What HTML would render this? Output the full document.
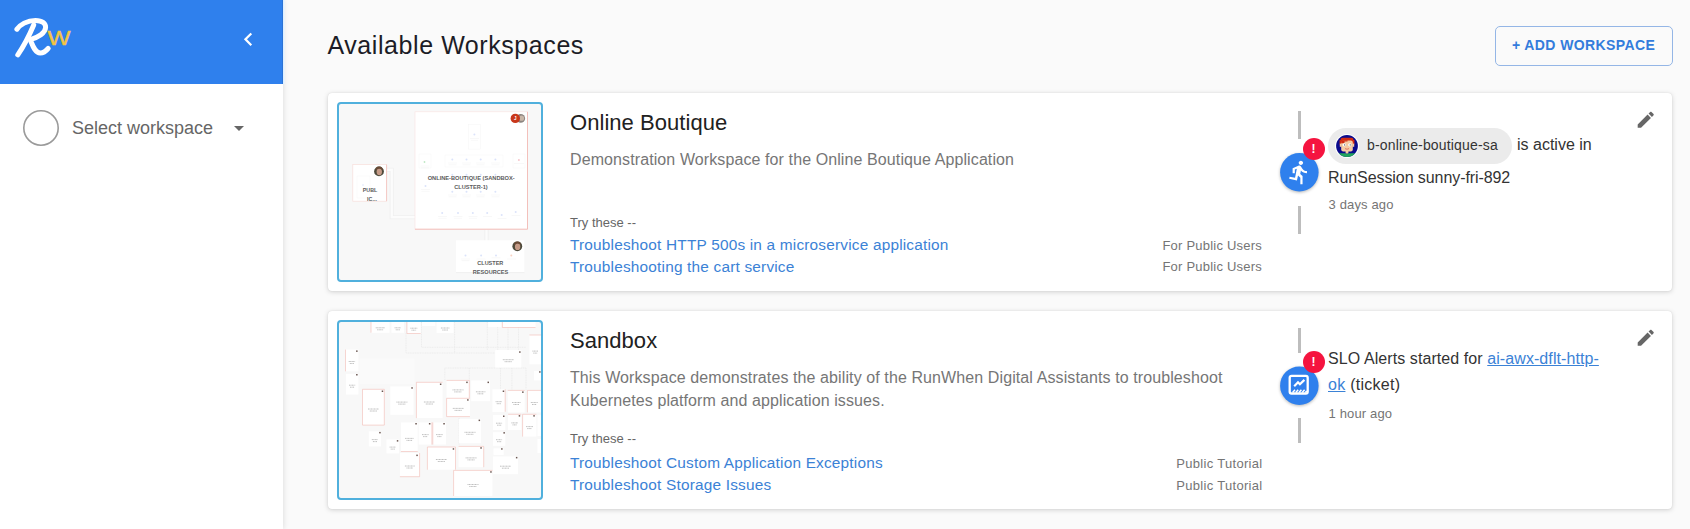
<!DOCTYPE html>
<html lang="en">
<head>
<meta charset="utf-8">
<title>Available Workspaces</title>
<style>
*{box-sizing:border-box;margin:0;padding:0}
html,body{width:1690px;height:529px;overflow:hidden;background:#fafafa;font-family:"Liberation Sans",sans-serif;color:#212121}
.abs{position:absolute;white-space:nowrap;line-height:20px}
svg{position:absolute;overflow:visible}
#side{position:absolute;left:0;top:0;width:283px;height:529px;background:#fff;box-shadow:1px 0 5px rgba(0,0,0,.10)}
#sidehead{position:absolute;left:0;top:0;width:283px;height:84px;background:#2f80ed;box-shadow:inset -1px 0 0 #2b73d6}
#circle{position:absolute;left:23px;top:110px;width:36px;height:36px;border-radius:50%;border:1.5px solid #9a9a9a}
#selws{left:72px;top:118px;font-size:18px;color:#666}
#arrow{position:absolute;left:234px;top:126px;width:0;height:0;border-left:5px solid transparent;border-right:5px solid transparent;border-top:5.5px solid #666}
h1{position:absolute;left:327.5px;top:35px;font-size:25px;line-height:20px;font-weight:400;color:#1c1c26;white-space:nowrap;letter-spacing:.57px}
#addbtn{position:absolute;left:1495px;top:26px;width:178px;height:40px;border:1px solid #94b6e6;border-radius:5px}
#addtxt{left:1512px;top:34.6px;color:#337cdc;font-weight:700;font-size:14px;letter-spacing:.4px}
.card{position:absolute;left:328px;width:1344px;height:198px;background:#fff;border-radius:4px;box-shadow:0 1px 5px rgba(0,0,0,.17),0 0 1px rgba(0,0,0,.14)}
.thumb{position:absolute;left:337px;width:206px;height:180px;border:2px solid #50b0dd;border-radius:4px;background:#f8f8f8;overflow:hidden}
.title{left:570px;letter-spacing:.05px;font-size:22px;color:#212121}
.desc{left:570px;font-size:16px;color:#767676;letter-spacing:.1px}
.try{left:570px;font-size:13px;color:#666}
.lnk{left:570px;font-size:15.400px;color:#3b82d6;letter-spacing:.19px}
.tag{right:428px;font-size:13px;color:#757575;letter-spacing:.22px}
.vline{position:absolute;left:1298px;width:3px;background:#bdbdbd}
.dot{position:absolute;left:1280.5px;width:38px;height:38px;border-radius:50%;background:#2f80ed;box-shadow:0 1px 3px rgba(0,0,0,.3)}
.dsv{filter:drop-shadow(0 1px 1.5px rgba(0,0,0,.28))}
.badge{position:absolute;left:1303px;width:22px;height:22px;border-radius:50%;background:#f5143f;color:#fff;font-size:12px;font-weight:700;line-height:22px;text-align:center;padding-right:1px}
.act{left:1328px;font-size:16px;color:#333}
.ago{left:1328.5px;font-size:13px;color:#757575;letter-spacing:.15px}
.chip{position:absolute;left:1328px;top:128px;width:184px;height:36px;border-radius:18px;background:#ebebeb}
a{color:#3b82d6;text-decoration:underline}
</style>
</head>
<body>
<div id="side">
  <div id="sidehead"></div>
  <svg style="left:0;top:0" width="90" height="70" viewBox="0 0 90 70" role="img" aria-label="RunWhen logo">
    <title>RunWhen</title>
    <g fill="none" stroke="#fff" stroke-width="5" stroke-linecap="round" stroke-linejoin="round">
      <path d="M16.9 29.2C20 24.8 27 20.4 35.5 20.4C42.5 20.4 45.8 23.4 45.6 27.5C45.3 33 38.5 37.6 30.2 39.6C32.5 45 34.8 53 40.2 53C43.5 53 46.3 50.8 48.2 48.4"/>
      <path d="M33.700 25C29.500 35 23.500 46.500 17.800 54.800"/>
    </g>
    <text x="47.6" y="45.2" font-family="Liberation Sans, sans-serif" font-size="19.5" fill="#f4c542" stroke="#f4c542" stroke-width=".400" transform="translate(47.6 0) scale(1.25 1) translate(-47.6 0)">W</text>
  </svg>
  <svg style="left:235.100px;top:25.800px" width="26.600" height="26.600" viewBox="0 0 24 24"><path fill="#fff" d="M15.41 7.41L14 6l-6 6 6 6 1.41-1.41L10.830 12z"/></svg>
  <svg style="left:21px;top:108px" width="40" height="40" viewBox="0 0 40 40"><circle cx="20" cy="20" r="17.2" fill="none" stroke="#9a9a9a" stroke-width="1.600"/></svg>
  <div id="selws" class="abs">Select workspace</div>
  <div id="arrow"></div>
</div>
<div style="position:absolute;left:283px;top:0;width:2px;height:84px;background:linear-gradient(90deg,#d9ecff,#eef6fd)"></div>
<h1>Available Workspaces</h1>
<div id="addbtn"></div>
<div id="addtxt" class="abs">+ ADD WORKSPACE</div>

<div class="card" style="top:93px"></div>
<div class="thumb" style="top:102px"></div>
<svg id="t1" style="left:339px;top:104px" width="202" height="176" viewBox="339 104 202 176">
<g fill="none">
<path d="M387 169.800H391.700V217.300H415" stroke="#efefef" stroke-width="4"/>
<path d="M387 169.800H391.700V217.300H415" stroke="#fcfcfc" stroke-width="2.400"/>
<path d="M486.500 229V241" stroke="#efefef" stroke-width="4"/>
<path d="M486.500 229V241" stroke="#fcfcfc" stroke-width="2.400"/>
<rect x="415" y="111.800" width="112.500" height="117.400" fill="#fff" stroke="#fae6e4" stroke-width=".7"/>
<path d="M527.500 111.800V229.200H415" stroke="#f1b5ae" stroke-width=".8"/>
<rect x="352.800" y="164.600" width="33.800" height="36.600" fill="#fff" stroke="#f8dedb" stroke-width=".7"/>
<path d="M386.600 164.600V201.200" stroke="#f3c2bc" stroke-width=".8"/>
<rect x="456" y="240.300" width="68.300" height="32" fill="#fff"/>
<path d="M456 272.600H524.300" stroke="#ececec" stroke-width=".8"/>
<g stroke="#f5f5f5" stroke-width=".5">
<rect x="468.400" y="124.600" width="12.300" height="24.500"/>
<rect x="445" y="155" width="58" height="12"/>
<rect x="419" y="154" width="12" height="14"/>
<rect x="513" y="154" width="12" height="14"/>
<rect x="357" y="176" width="13" height="22"/>
</g>
<g fill="#dbe3fa">
<circle cx="474.400" cy="134.600" r="1"/>
<circle cx="452.300" cy="159.500" r="1"/><circle cx="466.500" cy="159.500" r="1"/><circle cx="480.700" cy="159.500" r="1"/><circle cx="495.400" cy="159.500" r="1"/>
<circle cx="452.300" cy="174.700" r="1"/><circle cx="466.500" cy="174.700" r="1"/><circle cx="480.700" cy="174.700" r="1"/><circle cx="495.400" cy="174.700" r="1"/>
<circle cx="452.300" cy="191.700" r="1"/><circle cx="466.500" cy="191.700" r="1"/><circle cx="480.700" cy="191.700" r="1"/><circle cx="495.400" cy="191.700" r="1"/>
<circle cx="425.500" cy="186" r="1"/>
<circle cx="442.200" cy="212.900" r="1"/><circle cx="458" cy="212.900" r="1"/><circle cx="472.800" cy="212.900" r="1"/><circle cx="487.200" cy="212.900" r="1"/><circle cx="501.700" cy="215" r="1"/><circle cx="515.700" cy="212" r="1"/>
<circle cx="465.500" cy="255.400" r="1"/><circle cx="481.100" cy="255.400" r="1"/><circle cx="496" cy="255.400" r="1"/>
<circle cx="363" cy="185" r=".8"/>
</g>
<circle cx="424.500" cy="162" r=".9" fill="#bfe8c4"/>
<circle cx="518.900" cy="160.100" r="1" fill="#f7c6cc"/>
<circle cx="511.300" cy="255.400" r="1" fill="#f8d2c2"/>
<g stroke="#f0f0f0" stroke-width=".5">
<path d="M470 138.500h9M471 140.300h7"/>
<path d="M448 163h9M462 163h9M476 163h9M491 163h9M448.500 164.800h8M462.500 164.800h8M476.500 164.800h8M491.500 164.800h8"/>
<path d="M420.500 166h9M421 167.800h8M514 163.500h10"/>
<path d="M448 195h9M462 195h9M476 195h9M491 195h9M448.500 196.800h8M462.500 196.800h8M476.500 196.800h8M491.500 196.800h8"/>
<path d="M421 189.500h9M421.500 191.300h8"/>
<path d="M438 216.500h9M453.500 216.500h9M468.500 216.500h9M483 216.500h9M497.500 218.500h9M511.500 215.500h9M438.500 218.300h8M454 218.300h8M469 218.300h8"/>
<path d="M461 259h9M476.500 259h9M491.500 257.800h9M507 259h9M461.500 260.600h8"/>
</g>
<circle cx="520.700" cy="118.400" r="4.400" fill="#8c8580"/>
<circle cx="521.500" cy="118.200" r="2.600" fill="#c9b7a8"/>
<circle cx="515.300" cy="118.400" r="4.700" fill="#c8371b"/>
<circle cx="379" cy="171.400" r="4.900" fill="#4d4a3b"/>
<ellipse cx="379.300" cy="171.800" rx="2.700" ry="3.400" fill="#c59a86"/>
<path d="M375.800 170.200a3.400 3.400 0 0 1 6.800-.4l-1.200-.4c-1.400-1.200-3.200-1.100-4.400.100z" fill="#6b4a35"/>
<circle cx="517.300" cy="246.300" r="4.900" fill="#4d4a3b"/>
<ellipse cx="517.600" cy="246.700" rx="2.700" ry="3.400" fill="#c59a86"/>
<path d="M514.100 245.100a3.400 3.400 0 0 1 6.800-.4l-1.200-.4c-1.400-1.200-3.200-1.100-4.400.100z" fill="#6b4a35"/>
</g>
<g font-family="Liberation Sans, sans-serif" font-weight="700" font-size="5.600" fill="#5c5c5c" text-anchor="middle">
<text x="515.300" y="120.200" font-size="4.600" fill="#fff">J</text>
<text x="471.200" y="180.300" textLength="87" lengthAdjust="spacingAndGlyphs">ONLINE-BOUTIQUE (SANDBOX-</text>
<text x="471" y="189.300" textLength="33.500" lengthAdjust="spacingAndGlyphs">CLUSTER-1)</text>
<text x="370" y="192.100" textLength="14.500" lengthAdjust="spacingAndGlyphs">PUBL</text>
<text x="372" y="201.100" textLength="9.800" lengthAdjust="spacingAndGlyphs">IC...</text>
<text x="490.300" y="265.200" textLength="26" lengthAdjust="spacingAndGlyphs">CLUSTER</text>
<text x="490.500" y="274" textLength="35.300" lengthAdjust="spacingAndGlyphs">RESOURCES</text>
</g>

</svg>
<div class="abs title" style="top:113px">Online Boutique</div>
<div class="abs desc" style="top:150px">Demonstration Workspace for the Online Boutique Application</div>
<div class="abs try" style="top:212.5px">Try these --</div>
<div class="abs lnk" style="top:234.6px">Troubleshoot HTTP 500s in a microservice application</div>
<div class="abs lnk" style="top:256.8px">Troubleshooting the cart service</div>
<div class="abs tag" style="top:235.800px">For Public Users</div>
<div class="abs tag" style="top:257.400px">For Public Users</div>
<div class="vline" style="top:111px;height:28px"></div>
<div class="vline" style="top:205.5px;height:28px"></div>
<svg class="dsv" style="left:1279px;top:152px" width="41" height="41" viewBox="0 0 41 41"><circle cx="20.350" cy="20.300" r="19.250" fill="#2f80ed"/></svg>
<svg style="left:1285.900px;top:158.800px" width="26.500" height="26.500" viewBox="0 0 24 24"><path fill="#fff" d="M13.49 5.48c1.100 0 2-.900 2-2s-.900-2-2-2-2 .900-2 2 .900 2 2 2zm-3.600 13.900l1-4.400 2.100 2v6h2v-7.500l-2.100-2 .600-3c1.300 1.500 3.300 2.500 5.500 2.500v-2c-1.900 0-3.500-1-4.300-2.400l-1-1.600c-.400-.600-1-1-1.700-1-.300 0-.500.100-.800.100l-5.200 2.200v4.700h2v-3.400l1.800-.700-1.600 8.100-4.900-1-.400 2 7 1.400z"/></svg>
<div class="badge" style="top:138px">!</div>
<div class="chip"></div>
<svg id="av" style="left:1334.5px;top:134px" width="24" height="24" viewBox="0 0 24 24">
<defs><clipPath id="avc"><circle cx="12" cy="12" r="10.900"/></clipPath></defs>
<circle cx="12" cy="12" r="12" fill="#fff"/>
<circle cx="12" cy="12" r="10.900" fill="#0a0a8c"/>
<g clip-path="url(#avc)">
<rect x="5.500" y="3.800" width="13" height="5.500" rx="2" fill="#d22b12"/>
<rect x="4.600" y="6" width="3.200" height="4.500" fill="#d22b12"/>
<rect x="16.200" y="6" width="3.200" height="4.500" fill="#d22b12"/>
<rect x="6.200" y="6.600" width="11.600" height="10.800" rx="2" fill="#f4cba4"/>
<rect x="4.800" y="9.600" width="1.800" height="3.200" fill="#f4cba4"/>
<rect x="17.400" y="9.600" width="1.800" height="3.200" fill="#f4cba4"/>
<path d="M6.200 9.200V6.200H12.500V7.600H9.500V9.200Z" fill="#d22b12"/>
<rect x="10.600" y="17" width="2.800" height="2.600" fill="#f4cba4"/>
<circle cx="9.200" cy="10.800" r="1.600" fill="#fff"/>
<circle cx="14.800" cy="10.800" r="1.600" fill="#fff"/>
<circle cx="9.600" cy="10.900" r=".6" fill="#456"/>
<circle cx="15.200" cy="10.900" r=".6" fill="#456"/>
<path d="M10 14.600q2 1.300 4 0" stroke="#d8504a" stroke-width=".7" fill="none"/>
<path d="M1 19.200H10.600L12 20.300L13.400 19.200H23V24H1Z" fill="#20a45c"/>
</g>

</svg>
<div class="abs" style="left:1367px;top:135px;font-size:14px;color:#333;letter-spacing:.16px">b-online-boutique-sa</div>
<div class="abs act" style="left:1517px;top:134.500px">is active in</div>
<div class="abs act" style="top:168px;letter-spacing:-.08px">RunSession sunny-fri-892</div>
<div class="abs ago" style="top:195px">3 days ago</div>
<svg style="left:1634.800px;top:109.400px" width="21.500" height="21.500" viewBox="0 0 24 24"><path fill="#666" d="M3 17.250V21h3.750L17.810 9.940l-3.750-3.750L3 17.250zM20.710 7.040c.390-.390.390-1.020 0-1.410l-2.340-2.340c-.390-.390-1.020-.390-1.410 0l-1.830 1.830 3.750 3.750 1.830-1.830z"/></svg>

<div class="card" style="top:311px"></div>
<div class="thumb" style="top:320px"></div>
<svg id="t2" style="left:339px;top:322px" width="202" height="176" viewBox="339 322 202 176">
<defs><clipPath id="cp2"><rect x="339" y="322" width="202" height="176"/></clipPath></defs>
<g clip-path="url(#cp2)" fill="none">
<g stroke="#e8e8e8" stroke-width=".8" stroke-dasharray="1 .7">
<path d="M406 333V353H495M421.500 322V347.300H526M454.600 322V353M487.300 322V350M497.700 322V350M508 322V350M518.500 322V350"/>
<path d="M444.800 380V368H526V390M469.300 368V380M500.500 368V390M511.900 368V390"/>
<path d="M459 418V445M452 380V392"/>
</g>
<rect x="359.700" y="358.600" width="54.800" height="25.600" fill="#fafafa"/>
<rect x="371.0" y="321.8" width="18.5" height="11.0" fill="#fff"/>
<path d="M371.0 321.8V332.7" stroke="#f1bab4" stroke-width=".6"/>
<path d="M375.7 327.8h9.3M377.2 329.8h6.1" stroke="#808080" stroke-width=".5" stroke-dasharray="1.1 .4"/>
<rect x="391.4" y="321.8" width="12.7" height="11.0" fill="#fff"/>
<path d="M394.6 327.8h6.3M395.7 329.8h4.2" stroke="#808080" stroke-width=".5" stroke-dasharray="1.1 .4"/>
<rect x="406.9" y="321.8" width="13.8" height="11.7" fill="#fff"/>
<path d="M406.9 321.8V333.5" stroke="#f1bab4" stroke-width=".6"/>
<path d="M406.9 333.5H420.7" stroke="#f1bab4" stroke-width=".6"/>
<path d="M410.4 328.2h6.9M411.5 330.2h4.6" stroke="#808080" stroke-width=".5" stroke-dasharray="1.1 .4"/>
<rect x="422.1" y="321.8" width="13.2" height="4.2" fill="#fff"/>
<rect x="436.6" y="321.8" width="17.0" height="11.3" fill="#fff"/>
<path d="M440.9 328.0h8.5M442.3 330.0h5.6" stroke="#808080" stroke-width=".5" stroke-dasharray="1.1 .4"/>
<rect x="488.2" y="321.8" width="13.2" height="5.3" fill="#fff"/>
<rect x="502.4" y="321.8" width="33.1" height="5.7" fill="#fff"/>
<path d="M502.4 321.8V327.5" stroke="#f1bab4" stroke-width=".6"/>
<path d="M502.4 327.5H535.5" stroke="#f1bab4" stroke-width=".6"/>
<rect x="529.4" y="335.0" width="11.7" height="29.3" fill="#fff"/>
<path d="M529.4 335.0H541.2" stroke="#f1bab4" stroke-width=".6"/>
<path d="M532.4 351.1h5.9M533.3 353.1h3.9" stroke="#808080" stroke-width=".5" stroke-dasharray="1.1 .4"/>
<rect x="495.2" y="350.1" width="26.1" height="17.4" fill="#fff"/>
<path d="M502.8 359.7h11.0M504.6 361.7h7.3" stroke="#808080" stroke-width=".5" stroke-dasharray="1.1 .4"/>
<rect x="519.1" y="351.3" width="1.5" height="1.500" fill="#6a5650"/>
<rect x="345.5" y="349.6" width="12.9" height="21.7" fill="#fff"/>
<path d="M345.5 349.6V371.3" stroke="#f1bab4" stroke-width=".6"/>
<path d="M348.7 361.5h6.4M349.8 363.5h4.2" stroke="#808080" stroke-width=".5" stroke-dasharray="1.1 .4"/>
<rect x="356.1" y="350.4" width="1.5" height="1.500" fill="#6a5650"/>
<rect x="345.9" y="373.8" width="12.5" height="20.8" fill="#fff"/>
<path d="M349.0 385.2h6.2M350.0 387.2h4.1" stroke="#808080" stroke-width=".5" stroke-dasharray="1.1 .4"/>
<rect x="356.1" y="374.0" width="1.5" height="1.500" fill="#6a5650"/>
<rect x="534.0" y="370.9" width="7.2" height="9.5" fill="#fff"/>
<rect x="539.1" y="371.2" width="1.5" height="1.500" fill="#6a5650"/>
<rect x="446.6" y="380.4" width="22.7" height="17.4" fill="#fff"/>
<path d="M446.6 380.4H469.3" stroke="#f1bab4" stroke-width=".6"/>
<path d="M469.3 380.4V397.8" stroke="#f1bab4" stroke-width=".6"/>
<path d="M452.5 389.9h11.0M454.3 391.9h7.3" stroke="#808080" stroke-width=".5" stroke-dasharray="1.1 .4"/>
<rect x="466.2" y="381.6" width="1.5" height="1.500" fill="#6a5650"/>
<rect x="471.2" y="380.4" width="18.9" height="20.8" fill="#fff"/>
<path d="M475.9 391.8h9.5M477.5 393.8h6.2" stroke="#808080" stroke-width=".5" stroke-dasharray="1.1 .4"/>
<rect x="487.5" y="381.6" width="1.5" height="1.500" fill="#6a5650"/>
<rect x="362.5" y="389.3" width="21.7" height="35.8" fill="#fff"/>
<path d="M362.5 389.3H384.3" stroke="#f1bab4" stroke-width=".6"/>
<path d="M362.5 389.3V425.1" stroke="#f1bab4" stroke-width=".6"/>
<path d="M384.3 389.3V425.1" stroke="#f1bab4" stroke-width=".6"/>
<path d="M362.5 425.1H384.3" stroke="#f1bab4" stroke-width=".6"/>
<path d="M368.0 409.0h10.9M369.8 411.0h7.2" stroke="#808080" stroke-width=".5" stroke-dasharray="1.1 .4"/>
<rect x="381.7" y="390.5" width="1.5" height="1.500" fill="#6a5650"/>
<rect x="390.3" y="386.4" width="23.3" height="28.4" fill="#fff"/>
<path d="M396.4 402.1h11.0M398.3 404.1h7.3" stroke="#808080" stroke-width=".5" stroke-dasharray="1.1 .4"/>
<rect x="411.3" y="387.2" width="1.5" height="1.500" fill="#6a5650"/>
<rect x="416.4" y="382.3" width="26.1" height="35.8" fill="#fff"/>
<path d="M416.4 382.3H442.5" stroke="#f1bab4" stroke-width=".6"/>
<path d="M416.4 382.3V418.1" stroke="#f1bab4" stroke-width=".6"/>
<path d="M423.9 402.0h11.0M425.8 404.0h7.3" stroke="#808080" stroke-width=".5" stroke-dasharray="1.1 .4"/>
<rect x="439.9" y="383.5" width="1.5" height="1.500" fill="#6a5650"/>
<rect x="446.6" y="398.3" width="23.3" height="18.2" fill="#fff"/>
<path d="M446.6 398.3H469.9" stroke="#f1bab4" stroke-width=".6"/>
<path d="M446.6 398.3V416.6" stroke="#f1bab4" stroke-width=".6"/>
<path d="M446.6 416.6H469.9" stroke="#f1bab4" stroke-width=".6"/>
<path d="M452.8 408.4h11.0M454.6 410.4h7.3" stroke="#808080" stroke-width=".5" stroke-dasharray="1.1 .4"/>
<rect x="467.1" y="399.2" width="1.5" height="1.500" fill="#6a5650"/>
<rect x="492.4" y="389.3" width="12.9" height="22.6" fill="#fff"/>
<path d="M505.2 389.3V411.8" stroke="#f1bab4" stroke-width=".6"/>
<path d="M495.6 401.7h6.4M496.7 403.7h4.2" stroke="#808080" stroke-width=".5" stroke-dasharray="1.1 .4"/>
<rect x="502.7" y="390.5" width="1.5" height="1.500" fill="#6a5650"/>
<rect x="507.7" y="390.4" width="17.0" height="22.0" fill="#fff"/>
<path d="M507.7 390.4H524.7" stroke="#f1bab4" stroke-width=".6"/>
<path d="M512.0 402.5h8.5M513.4 404.5h5.6" stroke="#808080" stroke-width=".5" stroke-dasharray="1.1 .4"/>
<rect x="522.1" y="391.4" width="1.5" height="1.500" fill="#6a5650"/>
<rect x="527.4" y="390.4" width="13.8" height="22.0" fill="#fff"/>
<path d="M527.4 390.4H541.2" stroke="#f1bab4" stroke-width=".6"/>
<path d="M527.4 390.4V412.4" stroke="#f1bab4" stroke-width=".6"/>
<path d="M530.8 402.5h6.9M532.0 404.5h4.6" stroke="#808080" stroke-width=".5" stroke-dasharray="1.1 .4"/>
<rect x="493.0" y="414.9" width="12.3" height="15.1" fill="#fff"/>
<path d="M496.0 423.2h6.1M497.1 425.2h4.1" stroke="#808080" stroke-width=".5" stroke-dasharray="1.1 .4"/>
<rect x="503.0" y="415.5" width="1.5" height="1.500" fill="#6a5650"/>
<rect x="508.1" y="414.3" width="13.2" height="15.7" fill="#fff"/>
<path d="M508.1 414.3H521.3" stroke="#f1bab4" stroke-width=".6"/>
<path d="M511.4 422.9h6.6M512.5 424.9h4.4" stroke="#808080" stroke-width=".5" stroke-dasharray="1.1 .4"/>
<rect x="518.7" y="415.1" width="1.5" height="1.500" fill="#6a5650"/>
<rect x="522.6" y="414.3" width="13.8" height="22.3" fill="#fff"/>
<path d="M522.6 414.3H536.4" stroke="#f1bab4" stroke-width=".6"/>
<path d="M522.6 414.3V436.6" stroke="#f1bab4" stroke-width=".6"/>
<path d="M526.1 426.6h6.9M527.2 428.6h4.6" stroke="#808080" stroke-width=".5" stroke-dasharray="1.1 .4"/>
<rect x="533.3" y="415.1" width="1.5" height="1.500" fill="#6a5650"/>
<rect x="537.4" y="415.2" width="3.8" height="20.8" fill="#fff"/>
<rect x="458.9" y="419.0" width="22.1" height="24.2" fill="#fff"/>
<path d="M464.5 432.3h11.0M466.3 434.3h7.3" stroke="#808080" stroke-width=".5" stroke-dasharray="1.1 .4"/>
<rect x="478.6" y="419.6" width="1.5" height="1.500" fill="#6a5650"/>
<rect x="400.9" y="422.4" width="16.8" height="29.1" fill="#fff"/>
<path d="M400.9 451.5H417.7" stroke="#f1bab4" stroke-width=".6"/>
<path d="M405.1 438.4h8.4M406.5 440.4h5.6" stroke="#808080" stroke-width=".5" stroke-dasharray="1.1 .4"/>
<rect x="415.3" y="423.0" width="1.5" height="1.500" fill="#6a5650"/>
<rect x="418.7" y="422.4" width="13.2" height="22.1" fill="#fff"/>
<path d="M431.9 422.4V444.5" stroke="#f1bab4" stroke-width=".6"/>
<path d="M422.0 434.6h6.6M423.1 436.6h4.4" stroke="#808080" stroke-width=".5" stroke-dasharray="1.1 .4"/>
<rect x="428.9" y="423.0" width="1.5" height="1.500" fill="#6a5650"/>
<rect x="432.8" y="422.4" width="13.2" height="22.1" fill="#fff"/>
<path d="M432.8 422.4V444.5" stroke="#f1bab4" stroke-width=".6"/>
<path d="M436.1 434.6h6.6M437.3 436.6h4.4" stroke="#808080" stroke-width=".5" stroke-dasharray="1.1 .4"/>
<rect x="443.3" y="423.0" width="1.5" height="1.500" fill="#6a5650"/>
<rect x="368.8" y="431.3" width="12.3" height="15.1" fill="#fff"/>
<path d="M371.8 439.6h6.1M372.9 441.6h4.1" stroke="#808080" stroke-width=".5" stroke-dasharray="1.1 .4"/>
<rect x="379.2" y="431.9" width="1.5" height="1.500" fill="#6a5650"/>
<rect x="386.5" y="439.4" width="12.5" height="14.0" fill="#fff"/>
<path d="M389.6 447.1h6.2M390.7 449.1h4.1" stroke="#808080" stroke-width=".5" stroke-dasharray="1.1 .4"/>
<rect x="396.8" y="440.1" width="1.5" height="1.500" fill="#6a5650"/>
<rect x="399.9" y="453.0" width="19.7" height="23.6" fill="#fff"/>
<path d="M419.6 453.0V476.7" stroke="#f1bab4" stroke-width=".6"/>
<path d="M399.9 476.7H419.6" stroke="#f1bab4" stroke-width=".6"/>
<path d="M404.9 466.0h9.8M406.5 468.0h6.5" stroke="#808080" stroke-width=".5" stroke-dasharray="1.1 .4"/>
<rect x="416.3" y="454.6" width="1.5" height="1.500" fill="#6a5650"/>
<rect x="427.4" y="447.0" width="28.2" height="22.7" fill="#fff"/>
<path d="M427.4 447.0H455.5" stroke="#f1bab4" stroke-width=".6"/>
<path d="M427.4 447.0V469.7" stroke="#f1bab4" stroke-width=".6"/>
<path d="M455.5 447.0V469.7" stroke="#f1bab4" stroke-width=".6"/>
<path d="M435.9 459.5h11.0M437.8 461.5h7.3" stroke="#808080" stroke-width=".5" stroke-dasharray="1.1 .4"/>
<rect x="452.7" y="448.2" width="1.5" height="1.500" fill="#6a5650"/>
<rect x="458.6" y="446.4" width="25.1" height="20.8" fill="#fff"/>
<path d="M458.6 446.4H483.7" stroke="#f1bab4" stroke-width=".6"/>
<path d="M483.7 446.4V467.2" stroke="#f1bab4" stroke-width=".6"/>
<path d="M465.6 457.9h11.0M467.5 459.9h7.3" stroke="#808080" stroke-width=".5" stroke-dasharray="1.1 .4"/>
<rect x="480.3" y="447.2" width="1.5" height="1.500" fill="#6a5650"/>
<rect x="493.0" y="432.2" width="12.3" height="13.6" fill="#fff"/>
<path d="M496.0 439.7h6.1M497.1 441.7h4.1" stroke="#808080" stroke-width=".5" stroke-dasharray="1.1 .4"/>
<rect x="503.4" y="432.1" width="1.5" height="1.500" fill="#6a5650"/>
<rect x="493.5" y="448.3" width="10.2" height="6.6" fill="#fff"/>
<rect x="501.1" y="448.2" width="1.5" height="1.500" fill="#6a5650"/>
<rect x="493.0" y="456.4" width="25.1" height="17.8" fill="#fff"/>
<path d="M500.0 466.2h11.0M501.9 468.2h7.3" stroke="#808080" stroke-width=".5" stroke-dasharray="1.1 .4"/>
<rect x="515.9" y="456.9" width="1.5" height="1.500" fill="#6a5650"/>
<rect x="453.6" y="470.4" width="38.8" height="25.5" fill="#fff"/>
<path d="M453.6 470.4H492.4" stroke="#f1bab4" stroke-width=".6"/>
<path d="M453.6 470.4V496.0" stroke="#f1bab4" stroke-width=".6"/>
<path d="M467.5 484.5h11.0M469.3 486.5h7.3" stroke="#808080" stroke-width=".5" stroke-dasharray="1.1 .4"/>
<rect x="490.2" y="471.2" width="1.5" height="1.500" fill="#6a5650"/>
<rect x="537.4" y="438.9" width="3.8" height="14.2" fill="#fff"/>
</g>
</svg>
<div class="abs title" style="top:330.5px">Sandbox</div>
<div class="abs desc" style="top:367.5px">This Workspace demonstrates the ability of the RunWhen Digital Assistants to troubleshoot</div>
<div class="abs desc" style="top:390.5px">Kubernetes platform and application issues.</div>
<div class="abs try" style="top:429px">Try these --</div>
<div class="abs lnk" style="top:452.6px">Troubleshoot Custom Application Exceptions</div>
<div class="abs lnk" style="top:474.8px">Troubleshoot Storage Issues</div>
<div class="abs tag" style="top:453.5px;letter-spacing:.3px;right:427.500px">Public Tutorial</div>
<div class="abs tag" style="top:475.5px;letter-spacing:.3px;right:427.500px">Public Tutorial</div>
<div class="vline" style="top:328px;height:25px"></div>
<div class="vline" style="top:418px;height:25px"></div>
<svg class="dsv" style="left:1279px;top:365px" width="41" height="41" viewBox="0 0 41 41"><circle cx="20.350" cy="20.700" r="19.250" fill="#2f80ed"/></svg>
<svg style="left:1286.800px;top:373.200px" width="24" height="24" viewBox="0 0 24 24" fill="none" stroke="#fff">
  <rect x="2.700" y="2.900" width="18" height="17.600" rx="1.800" stroke-width="2.300"/>
  <path d="M7.200 13.200l3.800-3.900 1.900 1.900 4.500-4.300" stroke-width="2.200"/>
  <path d="M5.600 19.600l2.400-2.800M8.800 19.600l2.400-2.800M12 19.600l2.400-2.800M15.200 19.600l2.400-2.800M18.400 19.600l1.300-1.500" stroke-width="1.500"/>
</svg>
<div class="badge" style="top:351px">!</div>
<div class="abs act" style="top:348.7px;letter-spacing:.08px">SLO Alerts started for <a>ai-awx-dflt-http-</a></div>
<div class="abs act" style="top:374.5px;letter-spacing:.27px"><a>ok</a> (ticket)</div>
<div class="abs ago" style="top:403.600px">1 hour ago</div>
<svg style="left:1634.800px;top:327.400px" width="21.500" height="21.500" viewBox="0 0 24 24"><path fill="#666" d="M3 17.250V21h3.750L17.810 9.940l-3.750-3.750L3 17.250zM20.710 7.040c.390-.390.390-1.020 0-1.410l-2.340-2.340c-.390-.390-1.020-.390-1.410 0l-1.830 1.830 3.750 3.750 1.830-1.830z"/></svg>
</body>
</html>
